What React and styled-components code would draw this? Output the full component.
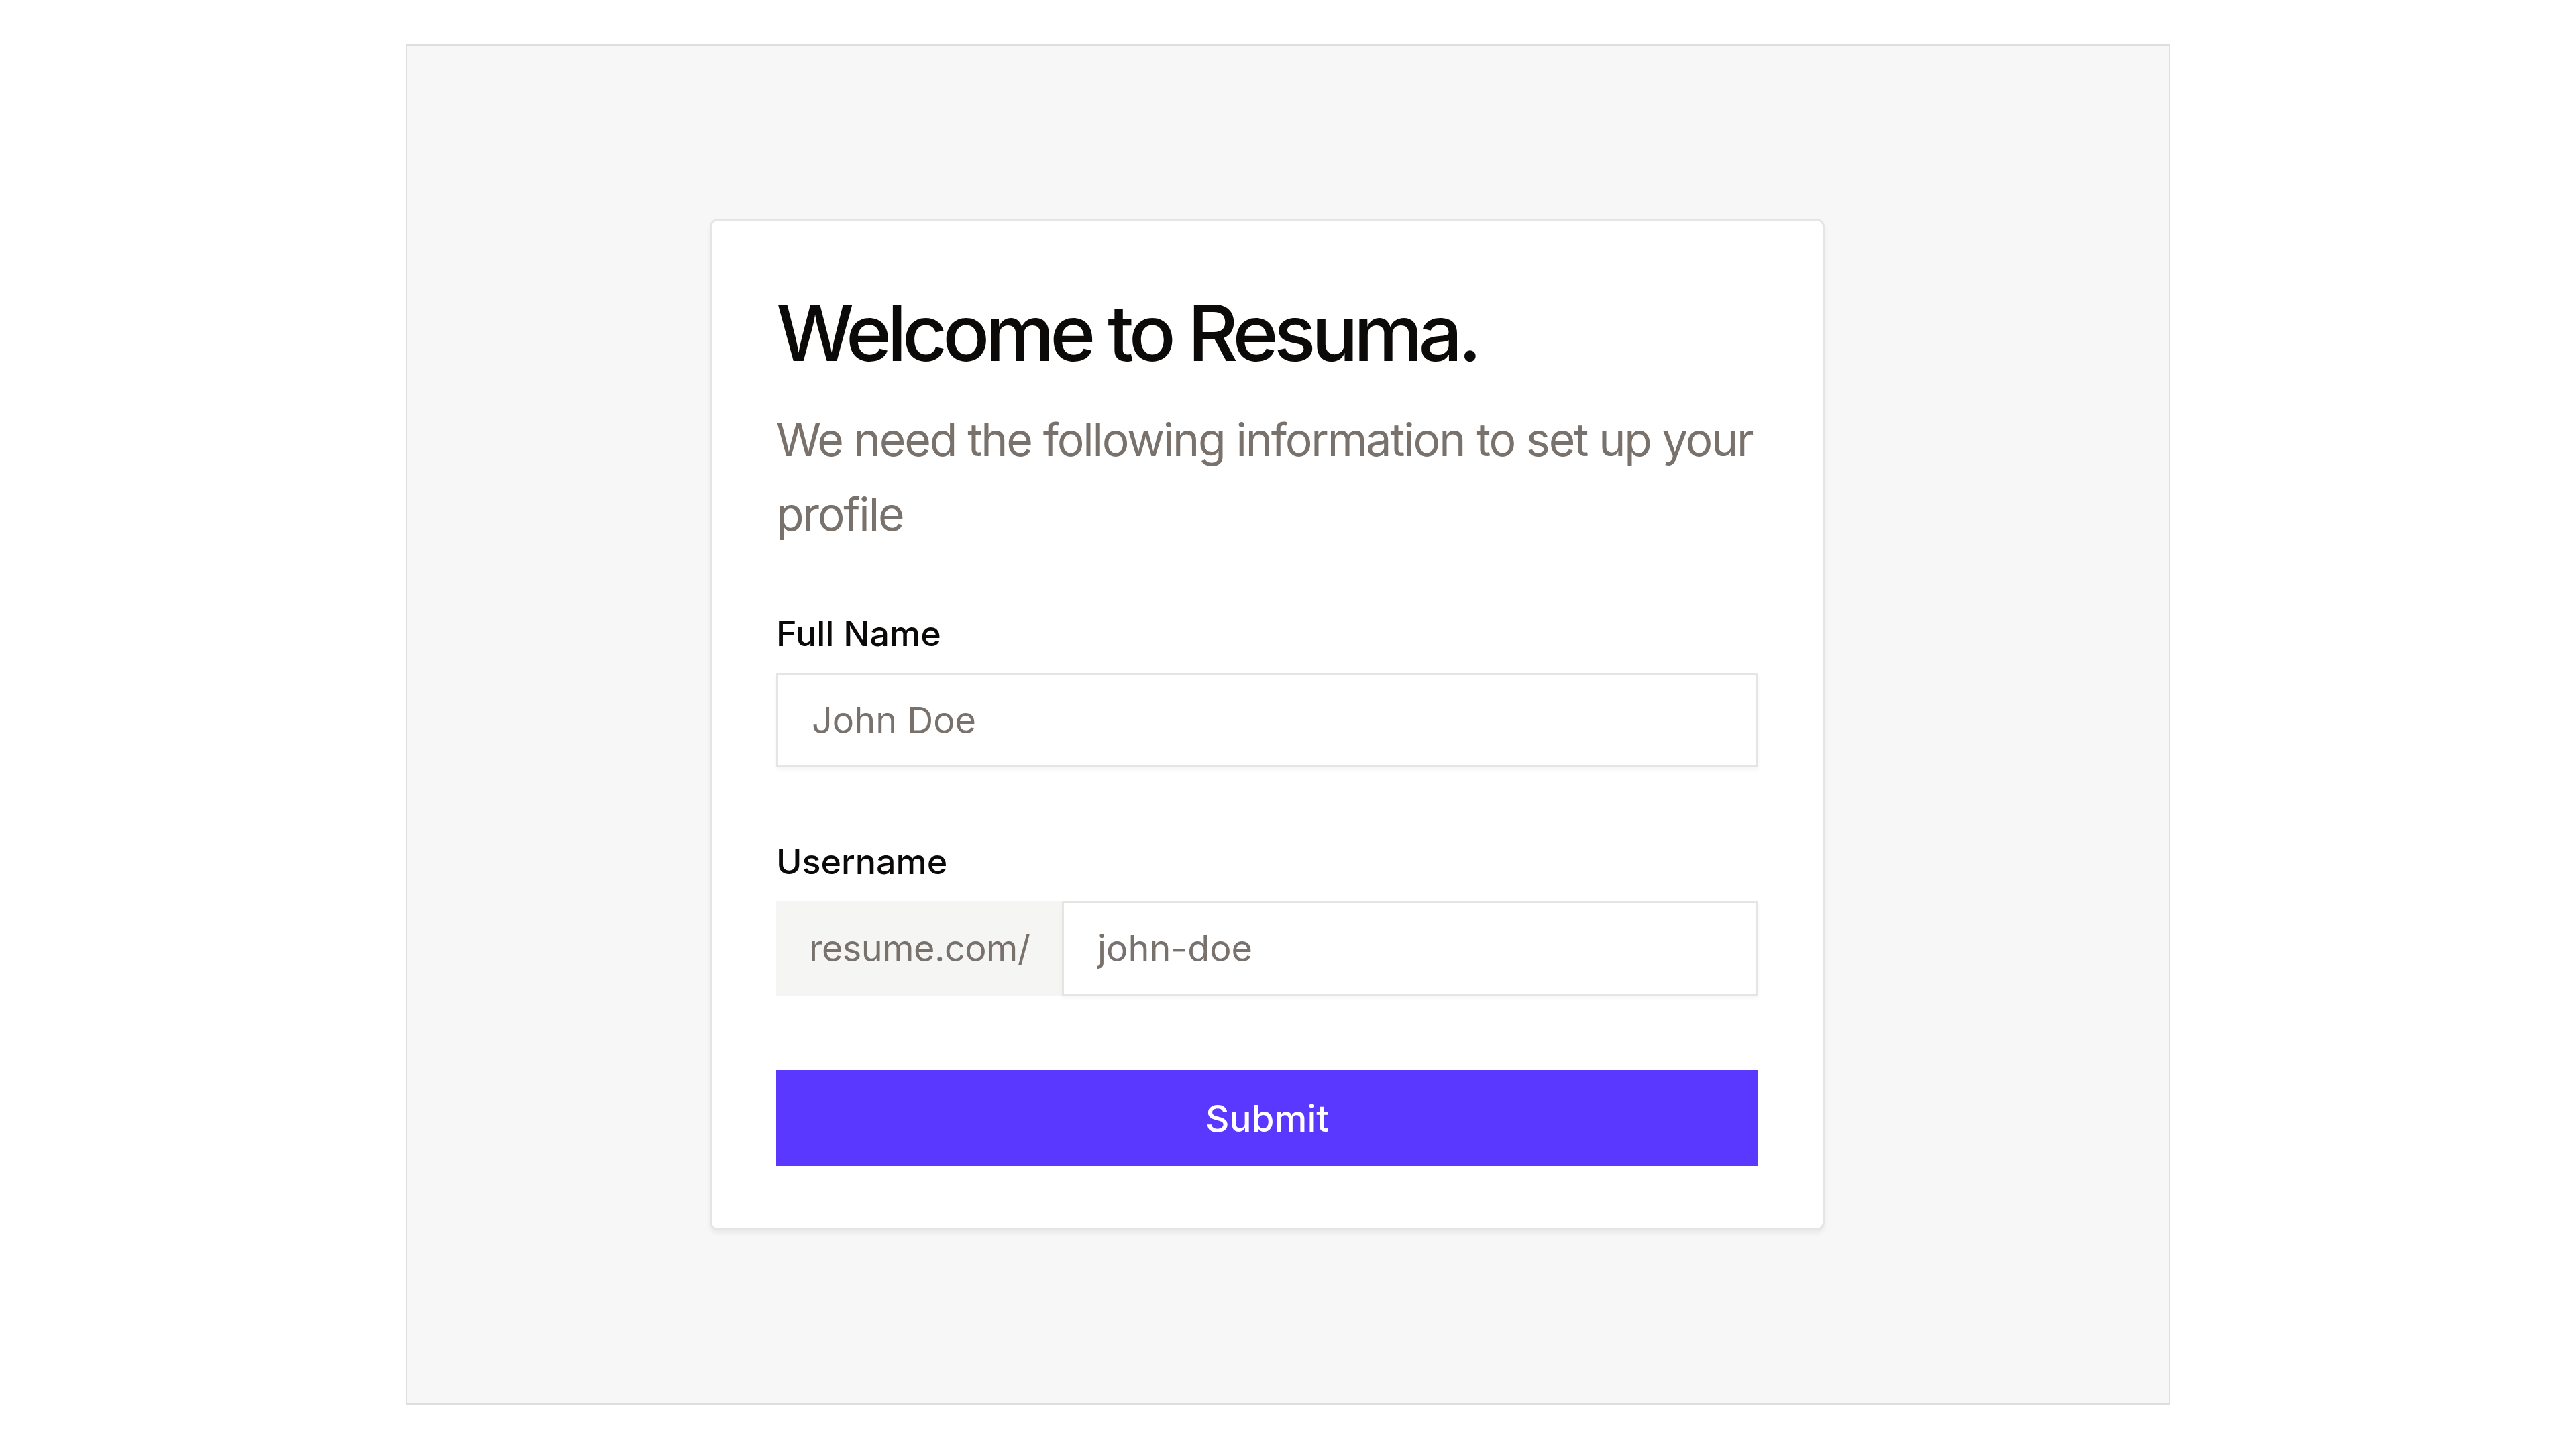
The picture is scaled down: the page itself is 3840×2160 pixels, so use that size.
import React from "react";
import styled, { createGlobalStyle } from "styled-components";

const GlobalStyle = createGlobalStyle`
  html, body {
    margin: 0;
    padding: 0;
    background: #ffffff;
  }
  body {
    font-family: Inter, "Noto Sans", "Liberation Sans", sans-serif;
  }
  * {
    box-sizing: border-box;
  }
`;

const Page = styled.div`
  width: 100vw;
  height: 100vh;
  display: flex;
  align-items: center;
  justify-content: center;
`;

const Frame = styled.div`
  width: 2630px;
  height: 2028px;
  background: #f7f7f7;
  border: 2px solid #dedede;
  display: flex;
  align-items: center;
  justify-content: center;
  padding-right: 62px;
`;

const Card = styled.form`
  width: 1662px;
  background: #ffffff;
  border: 3px solid #e7e5e4;
  border-radius: 12px;
  box-shadow: 0 5px 6px rgba(0, 0, 0, 0.05);
  padding: 96px 96px 93px;
  display: flex;
  flex-direction: column;
`;

const Title = styled.h1`
  margin: 0;
  font-size: 116px;
  line-height: 142px;
  font-weight: 500;
  letter-spacing: -0.057em;
  color: #0c0a09;
`;

const Lead = styled.p`
  margin: 33px 0 0;
  font-size: 68px;
  line-height: 111px;
  font-weight: 400;
  letter-spacing: -0.032em;
  color: #78716c;
`;

const Field = styled.div`
  display: flex;
  flex-direction: column;
  gap: 19px;
  margin-top: ${(props) => props.top}px;
`;

const Label = styled.label`
  font-size: 52px;
  line-height: 78px;
  font-weight: 500;
  color: #0c0a09;
`;

const Input = styled.input`
  width: 100%;
  height: 141px;
  margin: 0;
  border: 3px solid #e7e5e4;
  border-radius: 0;
  box-shadow: 0 4px 6px rgba(0, 0, 0, 0.04);
  padding: 0 50px;
  font-family: inherit;
  font-size: 54px;
  color: #0c0a09;
  background: #ffffff;
  outline: none;

  &::placeholder {
    color: #78716c;
    opacity: 1;
  }
`;

const AddonRow = styled.div`
  display: flex;
  height: 141px;
`;

const Prefix = styled.span`
  flex: 0 0 426px;
  display: flex;
  align-items: center;
  padding-left: 49px;
  background: #f5f5f4;
  font-size: 54px;
  letter-spacing: -0.01em;
  color: #78716c;
`;

const Submit = styled.button`
  margin-top: 111px;
  height: 143px;
  border: none;
  border-radius: 0;
  background: #5a38ff;
  color: #ffffff;
  font-family: inherit;
  font-size: 55px;
  font-weight: 500;
  cursor: pointer;
`;

const App = () => {
  return (
    <>
      <GlobalStyle />
      <Page>
        <Frame>
          <Card onSubmit={(e) => e.preventDefault()}>
            <Title>Welcome to Resuma.</Title>
            <Lead>We need the following information to set up your profile</Lead>
            <Field top={84}>
              <Label htmlFor="fullName">Full Name</Label>
              <Input id="fullName" placeholder="John Doe" />
            </Field>
            <Field top={102}>
              <Label htmlFor="username">Username</Label>
              <AddonRow>
                <Prefix>resume.com/</Prefix>
                <Input id="username" placeholder="john-doe" />
              </AddonRow>
            </Field>
            <Submit type="submit">Submit</Submit>
          </Card>
        </Frame>
      </Page>
    </>
  );
};

export default App;
